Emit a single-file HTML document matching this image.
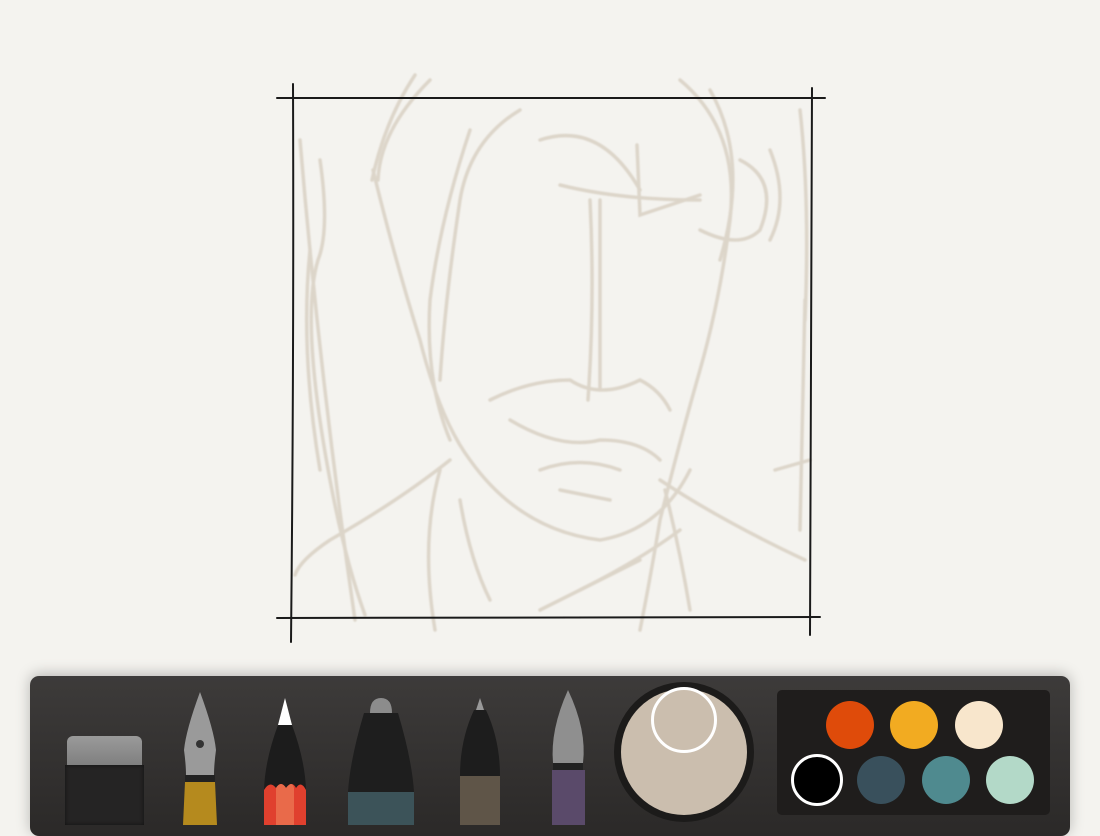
<!DOCTYPE html>
<html><head><meta charset="utf-8"><style>
html,body{margin:0;padding:0;width:1100px;height:825px;overflow:hidden;background:#f4f3ef;font-family:"Liberation Sans",sans-serif}
.bar{position:absolute;left:30px;top:676px;width:1040px;height:160px;border-radius:9px;background:linear-gradient(#3d3b3a,#2b2928);box-shadow:0 -2px 14px rgba(0,0,0,.25)}
.a{position:absolute}
</style></head><body>
<svg width="1100" height="670" style="position:absolute;left:0;top:0">
<defs><filter id="b"><feGaussianBlur stdDeviation="0.9"/></filter></defs>
<g fill="none" stroke="#d3c9ba" stroke-width="3.5" stroke-linecap="round" opacity=".7" filter="url(#b)">
<path d="M300 140 Q320 380 355 620"/><path d="M320 160 Q330 230 318 260 Q300 320 330 480 Q345 560 365 615"/>
<path d="M310 250 Q300 350 320 470"/>
<path d="M430 80 Q380 130 378 180"/><path d="M415 75 Q385 120 372 180"/>
<path d="M373 170 Q395 260 420 340 Q440 420 470 460 Q520 530 600 540 Q660 530 690 470"/>
<path d="M470 130 Q440 220 430 300 Q425 380 450 440"/>
<path d="M520 110 Q470 140 460 200 Q445 300 440 380"/>
<path d="M540 140 Q600 120 640 190"/><path d="M560 185 Q620 200 700 200"/>
<path d="M637 145 L640 215 L700 195"/>
<path d="M680 80 Q740 130 730 220 Q720 300 700 370 Q680 440 660 520 Q650 580 640 630"/>
<path d="M710 90 Q750 160 720 260"/>
<path d="M740 160 Q780 180 760 230 Q740 250 700 230"/>
<path d="M770 150 Q790 200 770 240"/>
<path d="M800 110 Q810 200 805 320"/><path d="M805 300 L800 530"/><path d="M775 470 L810 460"/>
<path d="M600 200 L600 390"/><path d="M590 200 Q595 300 588 400"/>
<path d="M490 400 Q530 380 570 380 Q600 400 640 380 Q660 390 670 410"/>
<path d="M510 420 Q560 450 600 440 Q640 440 660 460"/>
<path d="M540 470 Q580 455 620 470"/><path d="M560 490 L610 500"/>
<path d="M450 460 Q400 500 330 540 Q300 560 295 575"/>
<path d="M440 470 Q420 540 435 630"/><path d="M460 500 Q470 560 490 600"/>
<path d="M660 480 Q720 520 805 560"/><path d="M665 490 Q680 550 690 610"/>
<path d="M580 590 Q640 560 680 530"/><path d="M540 610 Q600 580 640 560"/>
</g>
<g stroke="#1a1a1a" stroke-width="2" fill="none" stroke-linecap="round">
<path d="M277 98 L825 98"/><path d="M293 84 Q294 350 291 642"/>
<path d="M812 88 Q811 360 810 635"/><path d="M277 618 L820 617"/>
</g>
</svg>
<div class="bar"></div>
<div class="a" style="left:67px;top:736px;width:75px;height:32px;background:linear-gradient(#9a9a9a,#7d7d7d);border-radius:6px 6px 0 0"></div>
<div class="a" style="left:65px;top:765px;width:79px;height:60px;background:#252424;box-shadow:inset 0 0 4px #111"></div>
<svg class="a" style="left:0;top:680px" width="620" height="145">
<path d="M200 12 Q186 50 184 70 Q186 85 186 95 L214 95 Q214 85 216 70 Q214 50 200 12Z" fill="#9a9a9a"/>
<circle cx="200" cy="64" r="4" fill="#333"/>
<rect x="185" y="95" width="30" height="7" fill="#222"/>
<path d="M185 102 L215 102 L217 145 L183 145Z" fill="#b58a1e"/>
<path d="M285 18 L278 45 L292 45Z" fill="#fff"/>
<path d="M278 45 L292 45 Q305 80 306 110 L264 110 Q265 80 278 45Z" fill="#1c1c1c"/>
<path d="M264 110 Q270 100 276 108 Q281 100 286 108 Q292 100 296 108 Q301 100 306 110 L306 145 L264 145Z" fill="#e0402e"/>
<path d="M276 108 Q281 100 286 108 Q292 100 294 108 L294 145 L276 145Z" fill="#e96a4a"/>
<path d="M370 33 Q370 18 381 18 Q392 18 392 33Z" fill="#8c8c8c"/>
<path d="M364 33 L398 33 Q412 80 414 112 L348 112 Q350 80 364 33Z" fill="#1e1e1e"/>
<rect x="348" y="112" width="66" height="33" fill="#3c5359"/>
<path d="M480 18 L476 30 L484 30Z" fill="#999"/>
<path d="M474 30 L486 30 Q500 60 500 96 L460 96 Q460 60 474 30Z" fill="#1d1d1d"/>
<rect x="460" y="96" width="40" height="49" fill="#5f5548"/>
<path d="M568 10 Q550 50 553 83 L583 83 Q587 50 568 10Z" fill="#8f8f8f"/>
<rect x="553" y="83" width="30" height="7" fill="#222"/>
<rect x="552" y="90" width="33" height="55" fill="#5a4a6a"/>
</svg>
<div class="a" style="left:614px;top:682px;width:140px;height:140px;border-radius:50%;background:#1c1b1a"></div>
<div class="a" style="left:621px;top:689px;width:126px;height:126px;border-radius:50%;background:#cbbeae"></div>
<div class="a" style="left:651px;top:687px;width:60px;height:60px;border-radius:50%;border:3px solid #fff;background:#cbbeae"></div>
<div class="a" style="left:777px;top:690px;width:273px;height:125px;border-radius:5px;background:#1f1d1c"></div>
<div class="a" style="left:826px;top:701px;width:48px;height:48px;border-radius:50%;background:#df4b0a"></div>
<div class="a" style="left:890px;top:701px;width:48px;height:48px;border-radius:50%;background:#f2ab21"></div>
<div class="a" style="left:955px;top:701px;width:48px;height:48px;border-radius:50%;background:#f8e6cc"></div>
<div class="a" style="left:791px;top:754px;width:46px;height:46px;border-radius:50%;background:#000;border:3px solid #fff"></div>
<div class="a" style="left:857px;top:756px;width:48px;height:48px;border-radius:50%;background:#39505c"></div>
<div class="a" style="left:922px;top:756px;width:48px;height:48px;border-radius:50%;background:#4f8a8f"></div>
<div class="a" style="left:986px;top:756px;width:48px;height:48px;border-radius:50%;background:#b3d9c8"></div>
</body></html>
